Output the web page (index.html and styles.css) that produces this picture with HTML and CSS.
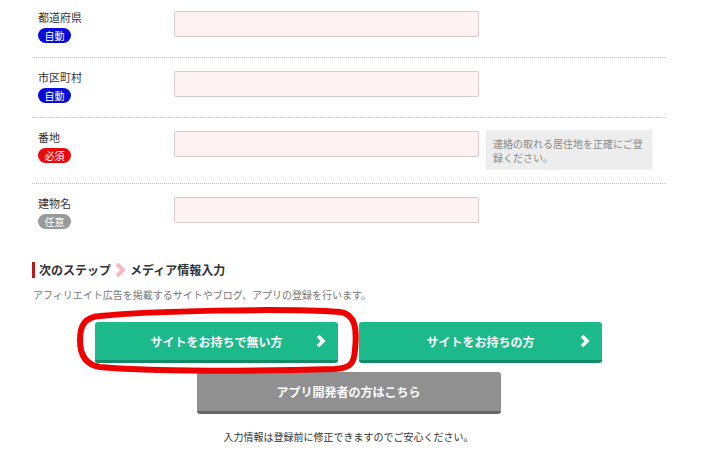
FILE: index.html
```html
<!DOCTYPE html>
<html lang="ja">
<head>
<meta charset="utf-8">
<title>登録フォーム</title>
<link rel="stylesheet" href="styles.css">
</head>
<body>
<div class="page">
  <div class="form">
    <div class="row row-first">
      <div class="label-col">
        <div class="label">都道府県</div>
        <span class="badge badge-auto">自動</span>
      </div>
      <div class="input"></div>
    </div>
    <div class="row">
      <div class="label-col">
        <div class="label">市区町村</div>
        <span class="badge badge-auto">自動</span>
      </div>
      <div class="input"></div>
    </div>
    <div class="row row-hint">
      <div class="label-col">
        <div class="label">番地</div>
        <span class="badge badge-req">必須</span>
      </div>
      <div class="input"></div>
      <div class="hint">連絡の取れる居住地を正確にご登録ください。</div>
    </div>
    <div class="row row-last">
      <div class="label-col">
        <div class="label">建物名</div>
        <span class="badge badge-opt">任意</span>
      </div>
      <div class="input"></div>
    </div>
  </div>

  <div class="next">
    <h2 class="next-title">次のステップ<svg class="step-chev" width="10" height="16" viewBox="0 0 10 16"><polyline points="2,2 8,8 2,14" fill="none" stroke="#f6b7c1" stroke-width="4"/></svg>メディア情報入力</h2>
    <p class="next-desc">アフィリエイト広告を掲載するサイトやブログ、アプリの登録を行います。</p>
    <div class="btn-row">
      <a class="btn btn-green"><span class="btn-text">サイトをお持ちで無い方</span><svg class="chev" width="10" height="14" viewBox="0 0 10 14"><polyline points="2,2 7,7 2,12" fill="none" stroke="#fff" stroke-width="3.6"/></svg></a>
      <a class="btn btn-green"><span class="btn-text">サイトをお持ちの方</span><svg class="chev" width="10" height="14" viewBox="0 0 10 14"><polyline points="2,2 7,7 2,12" fill="none" stroke="#fff" stroke-width="3.6"/></svg></a>
    </div>
    <a class="btn-grey">アプリ開発者の方はこちら</a>
    <p class="note">入力情報は登録前に修正できますのでご安心ください。</p>
  </div>
</div>
<svg class="mark" width="718" height="459" viewBox="0 0 718 459">
  <path d="M100 316 C150 311 280 308 340 312 C356 314 357 330 355 350 C354 362 352 368 335 369 C260 371 150 372 100 367 C86 365 80 355 80 340 C80 325 85 317 100 316 Z" fill="none" stroke="#ee0000" stroke-width="6" stroke-linejoin="round"/>
</svg>
</body>
</html>
```

FILE: styles.css
```css
html, body {
  margin: 0;
  padding: 0;
  background: #fff;
}
body {
  position: relative;
  width: 718px;
  height: 459px;
  overflow: hidden;
  font-family: "Noto Sans CJK JP", "Noto Sans", sans-serif;
  color: #333;
}
.page {
  width: 633px;
  margin-left: 32px;
}
.row {
  display: flex;
  align-items: flex-start;
  padding: 13px 0 14px;
  border-bottom: 1px dotted #bdbdbd;
}
.row-first { padding-top: 11px; }
.row-hint { padding-bottom: 13px; }
.row-last { border-bottom: none; }
.label-col {
  width: 142px;
  padding-left: 6px;
  box-sizing: border-box;
  flex: none;
}
.label {
  font-size: 11px;
  line-height: 12px;
  color: #333;
}
.badge {
  display: block;
  width: 33px;
  height: 15px;
  margin-top: 5px;
  border-radius: 8px;
  font-size: 10px;
  line-height: 15px;
  text-align: center;
  color: #fff;
}
.badge-auto { background: #0a0ad8; }
.badge-req { background: #e80a0a; }
.badge-opt { background: #999; }
.input {
  width: 305px;
  height: 26px;
  box-sizing: border-box;
  border: 1px solid #d6cccc;
  border-radius: 2px;
  background: #fff2f2;
  flex: none;
}
.hint {
  width: 166px;
  margin-left: 7px;
  margin-top: -1px;
  padding: 7px 7px 5px;
  box-sizing: border-box;
  background: #ededed;
  font-size: 10px;
  line-height: 14px;
  color: #8a8a8a;
  flex: none;
}
.next { margin-top: 19px; }
.next-title {
  margin: 0;
  display: flex;
  align-items: center;
  height: 16px;
  border-left: 3px solid #b51d1d;
  padding-left: 4px;
  font-size: 12px;
  line-height: 16px;
  font-weight: 700;
  color: #333;
}
.step-chev {
  margin: 0 5px 0 4px;
}
.next-desc {
  margin: 10px 0 0 1px;
  font-size: 10px;
  line-height: 14px;
  color: #777;
}
.btn-row {
  display: flex;
  justify-content: center;
  gap: 21px;
  margin-top: 20px;
}
.btn {
  display: grid;
  grid-template-columns: 1fr auto 1fr;
  align-items: center;
  width: 243px;
  height: 38px;
  border-radius: 3px;
  color: #fff;
  font-size: 12px;
  font-weight: 700;
}
.btn-green {
  background: #1cb98a;
  border-bottom: 3px solid #138a67;
}
.btn-text { grid-column: 2; }
.chev {
  grid-column: 3;
  justify-self: end;
  margin-right: 12px;
}
.btn-grey {
  display: flex;
  align-items: center;
  justify-content: center;
  width: 304px;
  height: 39px;
  margin: 9px auto 0;
  border-radius: 3px;
  background: #909090;
  border-bottom: 3px solid #666;
  color: #fff;
  font-size: 12px;
  font-weight: 700;
}
.note {
  margin: 16px 0 0;
  text-align: center;
  font-size: 10px;
  line-height: 14px;
  color: #333;
}
.mark {
  position: absolute;
  top: 0;
  left: 0;
  pointer-events: none;
}
```
